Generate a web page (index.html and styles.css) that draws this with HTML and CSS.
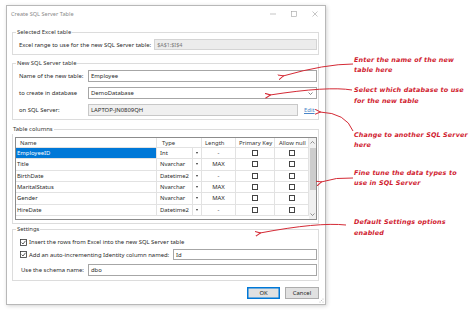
FILE: index.html
```html
<!DOCTYPE html>
<html lang="en">
<head>
    <meta charset="UTF-8">
    <meta name="viewport" content="width=device-width, initial-scale=1.0">
    <title>Create SQL Server Table</title>
    <link rel="stylesheet" href="styles.css">
</head>
<body>
    <div class="window">
        <div class="titlebar">
            <span class="title">Create SQL Server Table</span>
            <div class="controls">
                <span class="ctl"><svg width="6" height="6"><line x1="0" y1="3" x2="6" y2="3" stroke="#a0a0a0" stroke-width="0.6"/></svg></span>
                <span class="ctl"><svg width="6" height="6"><rect x="0.5" y="0.5" width="5" height="5" fill="none" stroke="#a0a0a0" stroke-width="0.6"/></svg></span>
                <span class="ctl"><svg width="6" height="6"><path d="M0.5 0.5L5.5 5.5M5.5 0.5L0.5 5.5" stroke="#a0a0a0" stroke-width="0.6"/></svg></span>
            </div>
        </div>

        <div class="content">
            <fieldset class="group g1">
                <legend>Selected Excel table</legend>
                <div class="row small">
                    <span class="nowrap">Excel range to use for the new SQL Server table:</span>
                    <div class="field readonly">$A$1:$I$4</div>
                </div>
            </fieldset>

            <fieldset class="group g2">
                <legend>New SQL Server table</legend>
                <div class="row">
                    <span class="label">Name of the new table:</span>
                    <div class="field">Employee</div>
                </div>
                <div class="row">
                    <span class="label">to create in database</span>
                    <div class="field select">
                        <span>DemoDatabase</span>
                        <svg width="5" height="3"><polyline points="0.5,0.5 2.5,2.5 4.5,0.5" fill="none" stroke="#555" stroke-width="0.7"/></svg>
                    </div>
                </div>
                <div class="row">
                    <span class="label">on SQL Server:</span>
                    <div class="field disabled">LAPTOP-JN0809QH</div>
                    <a class="edit">Edit</a>
                </div>
            </fieldset>

            <fieldset class="group g3">
                <legend>Table columns</legend>
                <div class="grid">
                    <div class="cells">
                        <div class="c head name-h">Name</div>
                        <div class="c head type-h">Type</div>
                        <div class="c head len-h">Length</div>
                        <div class="c head pk-h">Primary Key</div>
                        <div class="c head an-h">Allow null</div>

                        <div class="c name selected">EmployeeID</div>
                        <div class="c type">Int</div><div class="c drop"><i></i></div>
                        <div class="c mid">-</div>
                        <div class="c mid"><span class="box"></span></div>
                        <div class="c mid"><span class="box"></span></div>

                        <div class="c name">Title</div>
                        <div class="c type">Nvarchar</div><div class="c drop"><i></i></div>
                        <div class="c mid">MAX</div>
                        <div class="c mid"><span class="box"></span></div>
                        <div class="c mid"><span class="box"></span></div>

                        <div class="c name">BirthDate</div>
                        <div class="c type">Datetime2</div><div class="c drop"><i></i></div>
                        <div class="c mid">-</div>
                        <div class="c mid"><span class="box"></span></div>
                        <div class="c mid"><span class="box"></span></div>

                        <div class="c name">MaritalStatus</div>
                        <div class="c type">Nvarchar</div><div class="c drop"><i></i></div>
                        <div class="c mid">MAX</div>
                        <div class="c mid"><span class="box"></span></div>
                        <div class="c mid"><span class="box"></span></div>

                        <div class="c name">Gender</div>
                        <div class="c type">Nvarchar</div><div class="c drop"><i></i></div>
                        <div class="c mid">MAX</div>
                        <div class="c mid"><span class="box"></span></div>
                        <div class="c mid"><span class="box"></span></div>

                        <div class="c name">HireDate</div>
                        <div class="c type">Datetime2</div><div class="c drop"><i></i></div>
                        <div class="c mid">-</div>
                        <div class="c mid"><span class="box"></span></div>
                        <div class="c mid"><span class="box"></span></div>
                    </div>
                    <div class="scrollbar">
                        <svg class="sarrow" width="5" height="3"><polyline points="0.5,2.5 2.5,0.5 4.5,2.5" fill="none" stroke="#666" stroke-width="0.7"/></svg>
                        <div class="thumb"></div>
                        <div class="track"></div>
                        <svg class="sarrow" width="5" height="3"><polyline points="0.5,0.5 2.5,2.5 4.5,0.5" fill="none" stroke="#666" stroke-width="0.7"/></svg>
                    </div>
                </div>
            </fieldset>

            <fieldset class="group g4">
                <legend>Settings</legend>
                <div class="row check-row">
                    <svg class="check" width="7" height="7"><rect x="0.5" y="0.5" width="6" height="6" fill="#fff" stroke="#333" stroke-width="0.8"/><polyline points="1.6,3.6 3,5 5.5,1.8" fill="none" stroke="#333" stroke-width="0.8"/></svg>
                    <span class="nowrap">Insert the rows from Excel into the new SQL Server table</span>
                </div>
                <div class="row check-row2">
                    <svg class="check" width="7" height="7"><rect x="0.5" y="0.5" width="6" height="6" fill="#fff" stroke="#333" stroke-width="0.8"/><polyline points="1.6,3.6 3,5 5.5,1.8" fill="none" stroke="#333" stroke-width="0.8"/></svg>
                    <span class="nowrap">Add an auto-incrementing Identity column named:</span>
                    <div class="field id-field">Id</div>
                </div>
                <div class="row">
                    <span class="label schema">Use the schema name:</span>
                    <div class="field">dbo</div>
                </div>
            </fieldset>

            <div class="buttons">
                <button class="btn default">OK</button>
                <button class="btn cancel">Cancel</button>
            </div>
        </div>

        <svg class="grip" width="5" height="5"><circle cx="4" cy="1" r="0.5" fill="#aaa"/><circle cx="4" cy="4" r="0.5" fill="#aaa"/><circle cx="1" cy="4" r="0.5" fill="#aaa"/><circle cx="2.5" cy="2.5" r="0.5" fill="#aaa"/></svg>
    </div>

    <div class="notes">
        <p class="note n1">Enter the name of the new<br>table here</p>
        <p class="note n2">Select which database to use<br>for the new table</p>
        <p class="note n3">Change to another SQL Server<br>here</p>
        <p class="note n4">Fine tune the data types to<br>use in SQL Server</p>
        <p class="note n5">Default Settings options<br>enabled</p>
    </div>

    <svg class="arrows" width="474" height="311">
        <defs>
            <marker id="head" markerWidth="6" markerHeight="6" refX="1" refY="3" orient="auto-start-reverse" markerUnits="userSpaceOnUse">
                <path d="M6 0.5L0.5 3L6 5.5" fill="none" stroke="#d42a35" stroke-width="1"/>
            </marker>
        </defs>
        <path d="M353 64 Q325 64 283 76" marker-end="url(#head)"/>
        <path d="M352 90 Q328 86 270 95" marker-end="url(#head)"/>
        <path d="M353 131 Q346 113 320 112" marker-end="url(#head)"/>
        <path d="M353 178 Q336 177 321 182" marker-end="url(#head)"/>
        <path d="M346 225 Q318 222 260 233" marker-end="url(#head)"/>
    </svg>
</body>
</html>
```

FILE: styles.css
```css
body {
    margin: 0;
    width: 474px;
    height: 311px;
    overflow: hidden;
    position: relative;
    display: flex;
    align-items: flex-start;
    background-color: #fff;
    font-family: "Noto Sans", "Open Sans", sans-serif;
    font-size: 5.9px;
    color: #2a2a2a;
}
.window {
    position: relative;
    flex: none;
    margin: 5px 0 0 6px;
    width: 318px;
    height: 298px;
    border: 1px solid #b8b8b8;
    background-color: #fff;
    box-shadow: 1px 1px 4px rgba(0, 0, 0, 0.18);
    display: flex;
    flex-direction: column;
}
.titlebar {
    height: 15px;
    display: flex;
    justify-content: space-between;
    align-items: center;
    padding-left: 4px;
}
.title {
    color: #8a8a8a;
    font-size: 5.6px;
}
.controls {
    display: flex;
    align-self: stretch;
}
.ctl {
    width: 21px;
    display: flex;
    align-items: center;
    justify-content: center;
}
.content {
    display: flex;
    flex-direction: column;
    padding: 0 6px 0 5px;
}
.group {
    margin: 0;
    min-width: 0;
    border: 1px solid #dcdcdc;
    padding: 0 1px 0 6px;
}
legend {
    padding: 0 1px;
    margin-left: -3px;
    line-height: 9px;
    color: #333;
}
.g1 {
    margin-top: 6.5px;
    padding-top: 2.5px;
    padding-bottom: 4px;
}
.g2 {
    margin-top: 3.5px;
    padding-top: 2.5px;
    padding-bottom: 3px;
    display: flex;
    flex-direction: column;
    gap: 5px;
}
.g3 {
    margin-top: 4.5px;
    padding: 3.5px 1px 2.5px 2px;
}
.g4 {
    margin-top: 1px;
    padding-top: 3.5px;
    padding-bottom: 4px;
}
.row {
    display: flex;
    align-items: center;
    height: 12px;
}
.row.small {
    height: 11px;
    gap: 3px;
}
.nowrap {
    white-space: nowrap;
}
.label {
    width: 69px;
    flex: none;
    white-space: nowrap;
}
.field {
    flex: 1;
    align-self: stretch;
    box-sizing: border-box;
    border: 1px solid #a6a6a6;
    background-color: #fff;
    padding-left: 2px;
    display: flex;
    align-items: center;
    white-space: nowrap;
}
.readonly {
    background-color: #ececec;
    border-color: #d4d4d4;
    color: #777;
    font-size: 5.4px;
}
.disabled {
    background-color: #f0f0f0;
    border-color: #c8c8c8;
    flex: none;
    width: 210px;
}
.select {
    justify-content: space-between;
    padding-right: 3px;
}
.edit {
    margin-left: 6px;
    color: #4a86c8;
    text-decoration: underline;
}
.grid {
    height: 83px;
    box-sizing: border-box;
    border: 1px solid #8c8c8c;
    display: flex;
}
.cells {
    display: grid;
    grid-template-columns: 141px 36px 9px 34px 39px 34px;
    grid-template-rows: 10px repeat(6, 11.33px);
    align-content: start;
}
.c {
    box-sizing: border-box;
    border-right: 1px solid #e2e2e2;
    border-bottom: 1px solid #e2e2e2;
    display: flex;
    align-items: center;
    padding-left: 1px;
    white-space: nowrap;
    overflow: hidden;
}
.head {
    color: #333;
}
.name-h { padding-left: 4px; }
.type-h { grid-column: span 2; padding-left: 5px; }
.len-h { padding-left: 3px; }
.pk-h { padding-left: 3px; }
.an-h { padding-left: 4px; }
.type {
    padding-left: 3px;
}
.selected {
    background-color: #0078d7;
    color: #fff;
}
.drop {
    justify-content: center;
    padding: 0;
}
.drop i {
    border-left: 1.5px solid transparent;
    border-right: 1.5px solid transparent;
    border-top: 2px solid #333;
}
.mid {
    justify-content: center;
    padding: 0;
}
.box {
    width: 6px;
    height: 6px;
    box-sizing: border-box;
    border: 1px solid #444;
}
.scrollbar {
    width: 7px;
    background-color: #f0f0f0;
    display: flex;
    flex-direction: column;
    align-items: center;
}
.sarrow {
    margin: 3px 0;
    flex: none;
}
.thumb {
    margin-top: 1px;
    width: 6px;
    height: 42px;
    background-color: #cdcdcd;
}
.track {
    flex: 1;
}
.check {
    flex: none;
    margin: 0 2px 0 1px;
}
.check-row {
    height: 10px;
}
.check-row2 {
    margin-top: 1.5px;
}
.check-row2 .field {
    align-self: auto;
    height: 11px;
    flex: none;
    width: 144px;
    margin-left: auto;
}
.g4 .row:last-child {
    margin-top: 3.5px;
}
.schema {
    padding-left: 2px;
    box-sizing: border-box;
}
.buttons {
    margin-top: 6px;
    display: flex;
    justify-content: flex-end;
    gap: 5px;
}
.btn {
    height: 12px;
    padding: 0;
    box-sizing: border-box;
    font-family: inherit;
    font-size: 5.9px;
    color: #222;
    background-color: #e1e1e1;
    border: 1px solid #adadad;
}
.default {
    width: 33px;
    border-color: #0078d7;
    box-shadow: inset 0 0 0 0.5px #0078d7;
}
.cancel {
    width: 34px;
}
.grip {
    position: absolute;
    right: 1px;
    bottom: 1px;
}
.notes {
    margin-left: 28px;
    display: flex;
    flex-direction: column;
}
.note {
    margin: 0;
    font-family: "DejaVu Sans", sans-serif;
    font-weight: bold;
    font-style: oblique;
    font-size: 6.4px;
    letter-spacing: 0.15px;
    line-height: 10.5px;
    color: #d0202e;
    white-space: nowrap;
}
.n1 { margin-top: 54.75px; }
.n2 { margin-top: 9.65px; }
.n3 { margin-top: 23.3px; }
.n4 { margin-top: 17px; }
.n5 { margin-top: 28.8px; }
.arrows {
    position: absolute;
    left: 0;
    top: 0;
    pointer-events: none;
}
.arrows path {
    fill: none;
    stroke: #d42a35;
    stroke-width: 1;
}
```
